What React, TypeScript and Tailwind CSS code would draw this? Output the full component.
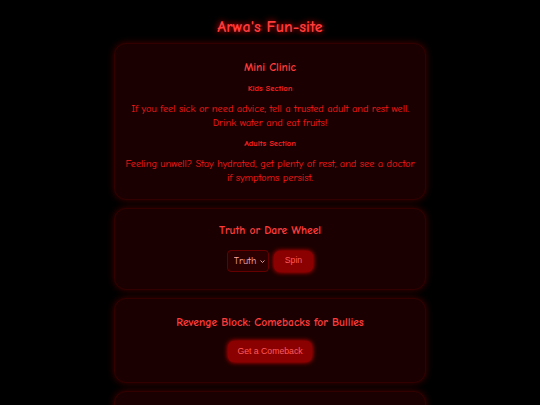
export default function App() {
  const comic = { fontFamily: '"Comic Sans MS", "Comic Neue", cursive' }
  const arial = { fontFamily: '"Liberation Sans", Arial, sans-serif' }
  const card = 'rounded-xl bg-[#1a0000] border border-[#330000] shadow-[0_0_7px_#450000] px-2 text-center'
  const btn = 'h-[21px] rounded-[6px] bg-[#8b0000] text-[#ff5a5a] text-[8.7px] shadow-[0_0_5px_#ff0000]'

  return (
    <div className="min-h-screen bg-black flex flex-col items-center pb-4" style={comic}>
      <h1 className="text-[16px] font-bold text-[#ff3c3c] mt-[17px] mb-[6px] leading-5 [text-shadow:0_0_6px_#ff0000]">
        Arwa's Fun-site
      </h1>

      <div className="w-[312px] flex flex-col gap-2">
        <section className={`${card} pt-[16px] pb-[14px]`}>
          <h2 className="text-[11.5px] font-bold text-[#ff3c3c] leading-4">Mini Clinic</h2>
          <h3 className="text-[8.5px] font-bold text-[#ff2020] mt-[4px] leading-4">Kids Section</h3>
          <p className="text-[10.3px] text-[#ff1a1a] leading-[14px] mt-[6px]">
            If you feel sick or need advice, tell a trusted adult and rest well. Drink water and eat fruits!
          </p>
          <h3 className="text-[8.5px] font-bold text-[#ff2020] mt-[5px] leading-4">Adults Section</h3>
          <p className="text-[10.3px] text-[#ff1a1a] leading-[14px] mt-[6px]">
            Feeling unwell? Stay hydrated, get plenty of rest, and see a doctor if symptoms persist.
          </p>
        </section>

        <section className={`${card} pt-[14px] pb-[17px]`}>
          <h2 className="text-[11.5px] font-bold text-[#ff3c3c] leading-4">Truth or Dare Wheel</h2>
          <div className="flex items-center justify-center gap-[5px] mt-[11px]">
            <div className="relative flex">
              <select
                className="block appearance-none h-[22px] w-[42px] rounded-[4px] bg-[#2a0000] border border-[#660000] text-[#ffaaaa] text-[10px] pl-[6px] pr-[10px] outline-none"
                style={comic}
              >
                <option>Truth</option>
                <option>Dare</option>
              </select>
              <svg className="absolute right-[4px] top-[10px] w-[5px] h-[3px] pointer-events-none" viewBox="0 0 10 6" fill="none" stroke="#ffaaaa" strokeWidth={1.8}>
                <path d="M1 1l4 4 4-4" />
              </svg>
            </div>
            <button className={`${btn} px-[11px]`} style={arial}>Spin</button>
          </div>
        </section>

        <section className={`${card} pt-[16px] pb-[20px]`}>
          <h2 className="text-[11.5px] font-bold text-[#ff3c3c] leading-4">Revenge Block: Comebacks for Bullies</h2>
          <div className="flex justify-center mt-[10px]">
            <button className={`${btn} px-[9px]`} style={arial}>Get a Comeback</button>
          </div>
        </section>

        <section className={`${card} h-[80px]`} />
      </div>
    </div>
  )
}
